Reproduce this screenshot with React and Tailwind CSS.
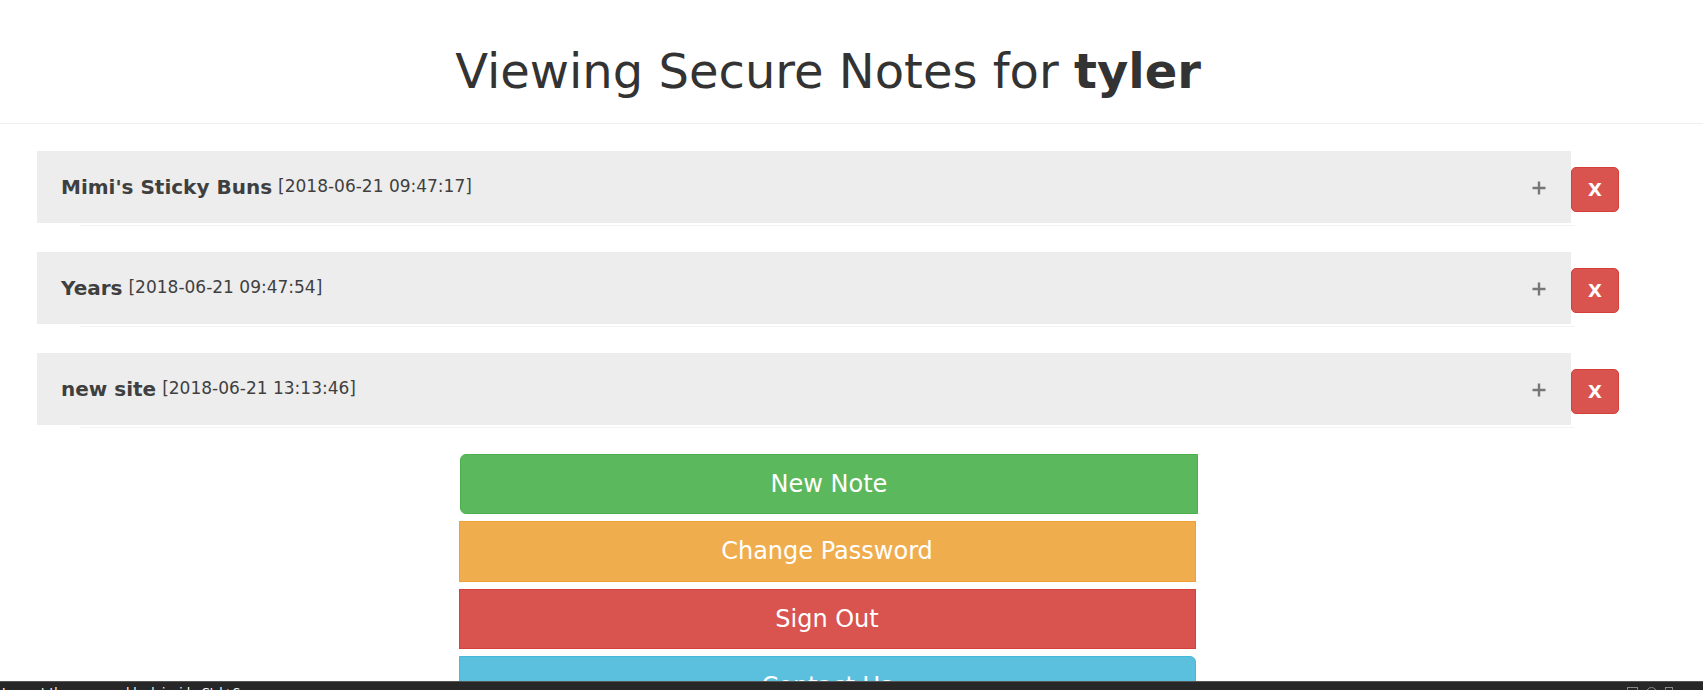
import React from 'react';

const notes = [
  { title: "Mimi's Sticky Buns", stamp: '[2018-06-21 09:47:17]' },
  { title: 'Years', stamp: '[2018-06-21 09:47:54]' },
  { title: 'new site', stamp: '[2018-06-21 13:13:46]' },
];

const PlusIcon = () => (
  <svg className="w-[14px] h-[14px] text-[#777]" viewBox="0 0 14 14" fill="none" stroke="currentColor" strokeWidth={2.4}>
    <path d="M7 0.5v13M0.5 7h13" />
  </svg>
);

const NoteRow = ({ note }) => (
  <div className="flex items-start mb-[26px] last:mb-[26px]">
    <div className="flex-1 flex flex-col">
      <div className="h-[72px] bg-[#ededed] flex items-center pl-[24px] pr-[25px] text-[#3f3f3f]">
        <span className="text-[20px] font-bold">{note.title}</span>
        <span className="text-[17px] ml-[6px]">{note.stamp}</span>
        <span className="ml-auto flex items-center pt-[2px]">
          <PlusIcon />
        </span>
      </div>
      <div className="h-px mt-[2px] ml-[43px] -mr-[4px] bg-[#f3f3f3]" />
    </div>
    <button className="mt-[16px] w-[48px] h-[45px] rounded-[5px] bg-[#d9534f] border border-[#d43f3a] text-white text-[18px] font-bold flex items-center justify-center">
      X
    </button>
  </div>
);

const App = () => {
  return (
    <div className="min-h-screen bg-white font-['DejaVu_Sans',sans-serif]">
      {/* Page header */}
      <div className="pt-[45px] pb-[25px] pr-[47px] border-b border-[#eee] text-center">
        <h1 className="text-[48px] leading-[1.1] text-[#333]">
          Viewing Secure Notes for <b>tyler</b>
        </h1>
      </div>

      <div className="w-[1656px]">
        {/* Notes */}
        <div className="pt-[27px] px-[37px]">
          {notes.map((n) => (
            <NoteRow key={n.title} note={n} />
          ))}
        </div>

        {/* Actions */}
        <div className="flex flex-col items-center gap-[7px] pb-10">
          <button className="w-[738px] h-[60px] bg-[#5cb85c] border border-[#4cae4c] rounded-l-[6px] text-white text-[24px] translate-x-[1px]">
            New Note
          </button>
          <button className="w-[737px] h-[61px] bg-[#f0ad4e] border border-[#eea236] text-white text-[24px] -translate-x-[1px]">
            Change Password
          </button>
          <button className="w-[737px] h-[60px] bg-[#d9534f] border border-[#d43f3a] text-white text-[24px] -translate-x-[1px]">
            Sign Out
          </button>
          <button className="w-[737px] h-[60px] bg-[#5bc0de] border border-[#46b8da] rounded-tr-[6px] text-white text-[24px] -translate-x-[1px]">
            Contact Us
          </button>
        </div>
      </div>

      {/* Bottom status bar overlay */}
      <div className="fixed left-0 right-0 bottom-0 h-[9px] bg-[#272727] border-t border-[#555] overflow-hidden">
        <div className="flex items-start pt-[4px] pl-[2px] text-[12px] leading-[14px] text-white font-['DejaVu_Sans',sans-serif]">
          <span>Inspect the page and look inside Ctrl+S</span>
          <span className="ml-auto flex gap-[8px] pr-[14px] pt-[1px]">
            <span className="w-[11px] h-[11px] border border-[#888]" />
            <span className="w-[11px] h-[11px] border border-[#888] rounded-full" />
            <span className="w-[8px] h-[11px] border border-[#888]" />
            <span className="w-[8px] h-[11px]" />
          </span>
        </div>
      </div>
    </div>
  );
};

export default App;
